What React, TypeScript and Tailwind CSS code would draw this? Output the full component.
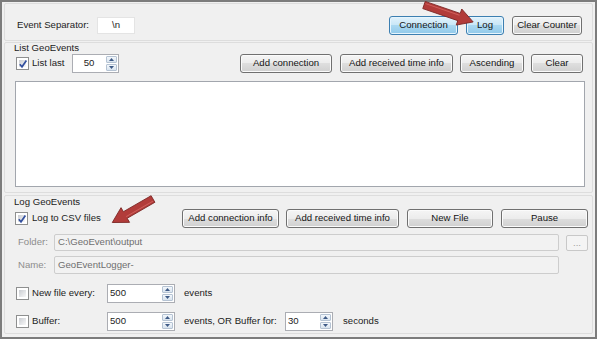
import React from "react";

const btn =
  "h-[19px] shrink-0 rounded-[3px] border border-[#707070] bg-[linear-gradient(to_bottom,#f5f5f5_0%,#ececec_50%,#dedede_50%,#d0d0d0_100%)] shadow-[inset_0_0_0_1px_#fbfbfb] flex items-center justify-center text-[#141414]";
const btnBlue =
  "h-[19px] shrink-0 rounded-[3px] border border-[#3c7fb1] bg-[linear-gradient(to_bottom,#e2f2fb_0%,#c7e6f7_50%,#aad8f1_50%,#90c9ea_100%)] shadow-[inset_0_0_0_1px_#e6f5fd] flex items-center justify-center text-[#141414]";

function Check({ on }: { on?: boolean }) {
  return (
    <div className="w-[13px] h-[13px] shrink-0 border border-[#8e8f8f] bg-white p-[2px] relative">
      <div className="w-full h-full bg-[linear-gradient(135deg,#c9ccd1_0%,#e6e7e9_60%,#f8f8f8_100%)]" />
      {on && (
        <svg className="absolute left-[1px] top-[1px]" width="10" height="10" viewBox="0 0 10 10">
          <path d="M1.8 5.2 L4 7.8 L8.4 1.6" fill="none" stroke="#324f9e" strokeWidth="1.7" />
        </svg>
      )}
    </div>
  );
}

function SpinBtn({ up }: { up?: boolean }) {
  return (
    <div className="flex-1 rounded-[1px] border border-[#b5c3d3] bg-[linear-gradient(to_bottom,#f3f7fb,#d9e4ef)] flex items-center justify-center">
      <svg width="5" height="3" viewBox="0 0 5 3">
        <path d={up ? "M0 3 L2.5 0 L5 3 Z" : "M0 0 L2.5 3 L5 0 Z"} fill="#3e5a86" />
      </svg>
    </div>
  );
}

function Spin({ value, w, center }: { value: string; w: string; center?: boolean }) {
  return (
    <div className={`h-[19px] ${w} shrink-0 border border-[#abadb3] bg-white flex`}>
      <div className={`flex-1 flex items-center ${center ? "justify-center" : "pl-[2px]"}`}>{value}</div>
      <div className="w-[13px] flex flex-col p-[1px] gap-[1px]">
        <SpinBtn up />
        <SpinBtn />
      </div>
    </div>
  );
}

function Arrow({ x, y, len, angle }: { x: number; y: number; len: number; angle: number }) {
  const h = len - 15;
  return (
    <g transform={`translate(${x} ${y}) rotate(${angle})`}>
      <polygon
        points={`0,-3.8 ${h},-3.8 ${h},-8.5 ${len},0 ${h},8.5 ${h},3.8 0,3.8`}
        fill="#b23c3a"
        stroke="#7a2422"
        strokeWidth="0.8"
        strokeLinejoin="round"
      />
      <line x1="1" y1="-1.8" x2={h} y2="-1.8" stroke="#cf605c" strokeWidth="1" />
    </g>
  );
}

export default function App() {
  return (
    <div className="w-[600px] h-[342px] bg-white relative [font-family:'Liberation_Sans',Arial,sans-serif] text-[9.6px] text-[#1c1c1c]">
      <div className="w-[597px] h-[339px] border-2 border-[#7c7c7c] bg-[#f0f0f0] flex flex-col px-[2px]">
        {/* Top bar */}
        <div className="mt-[1px] h-[38px] shrink-0 border border-[#dddddd] rounded-[2px] flex items-center pt-[6px] pl-[12px] pr-[10px]">
          <span className="w-[80px] shrink-0">Event Separator:</span>
          <div className="w-[38px] h-[17px] shrink-0 bg-white border border-[#e4e4e4] flex items-center pl-[14px]">\n</div>
          <div className="flex-1" />
          <div className={`${btnBlue} w-[69px]`}>Connection</div>
          <div className={`${btnBlue} w-[38px] ml-[8px]`}>Log</div>
          <div className={`${btn} w-[70px] ml-[8px]`}>Clear Counter</div>
        </div>

        {/* List GeoEvents */}
        <div className="mt-[1px] h-[151px] shrink-0 border border-[#dddddd] rounded-[2px] flex flex-col">
          <div className="pl-[9px] h-[10px] leading-[10px]">List GeoEvents</div>
          <div className="h-[20px] flex items-center pl-[11px] pr-[9px]">
            <Check on />
            <span className="ml-[3px] w-[40px] shrink-0">List last</span>
            <Spin value="50" w="w-[47px]" center />
            <div className="flex-1" />
            <div className={`${btn} w-[92px]`}>Add connection</div>
            <div className={`${btn} w-[113px] ml-[8px]`}>Add received time info</div>
            <div className={`${btn} w-[64px] ml-[7px]`}>Ascending</div>
            <div className={`${btn} w-[52px] ml-[7px]`}>Clear</div>
          </div>
          <div className="mt-[8px] h-[106px] ml-[10px] mr-[7px] bg-white border border-[#a2a6ad]" />
        </div>

        {/* Log GeoEvents */}
        <div className="mt-[2px] mb-[3px] flex-1 border border-[#dddddd] rounded-[2px] flex flex-col">
          <div className="pl-[9px] h-[12px] leading-[12px]">Log GeoEvents</div>
          <div className="h-[20px] flex items-center pl-[10px] pr-[4px]">
            <Check on />
            <span className="ml-[4px] w-[150px] shrink-0">Log to CSV files</span>
            <div className={`${btn} w-[97px]`}>Add connection info</div>
            <div className={`${btn} w-[113px] ml-[7px]`}>Add received time info</div>
            <div className={`${btn} w-[86px] ml-[8px]`}>New File</div>
            <div className={`${btn} w-[87px] ml-[8px]`}>Pause</div>
          </div>
          <div className="mt-[6px] h-[17px] flex items-center pl-[13px] pr-[4px]">
            <span className="w-[36px] shrink-0 text-[#8d8d8d]">Folder:</span>
            <div className="flex-1 h-full rounded-[2px] border border-[#cdcdcd] bg-[#f2f2f2] flex items-center pl-[3px] text-[#6f6f6f]">
              C:\GeoEvent\output
            </div>
            <div className="ml-[7px] w-[22px] h-[16px] shrink-0 rounded-[2px] border border-[#c8c8c8] bg-[#f4f4f4] flex items-center justify-center text-[#a0a0a0] leading-none">
              ...
            </div>
          </div>
          <div className="mt-[5px] h-[18px] flex items-center pl-[13px] pr-[33px]">
            <span className="w-[36px] shrink-0 text-[#8d8d8d]">Name:</span>
            <div className="flex-1 h-full rounded-[2px] border border-[#cdcdcd] bg-[#f2f2f2] flex items-center pl-[3px] text-[#6f6f6f]">
              GeoEventLogger-
            </div>
          </div>
          <div className="mt-[10px] h-[19px] flex items-center pl-[11px]">
            <Check />
            <span className="ml-[3px] w-[75px] shrink-0">New file every:</span>
            <Spin value="500" w="w-[68px]" />
            <span className="ml-[9px]">events</span>
          </div>
          <div className="mt-[9px] h-[19px] flex items-center pl-[11px]">
            <Check />
            <span className="ml-[3px] w-[75px] shrink-0">Buffer:</span>
            <Spin value="500" w="w-[68px]" />
            <span className="ml-[9px] w-[101px] shrink-0">events, OR Buffer for:</span>
            <Spin value="30" w="w-[48px]" />
            <span className="ml-[10px]">seconds</span>
          </div>
        </div>
      </div>

      {/* annotation arrows */}
      <svg className="absolute left-0 top-0 pointer-events-none" width="600" height="342">
        <Arrow x={424} y={5} len={52} angle={19} />
        <Arrow x={153} y={199} len={47} angle={150} />
      </svg>
    </div>
  );
}
